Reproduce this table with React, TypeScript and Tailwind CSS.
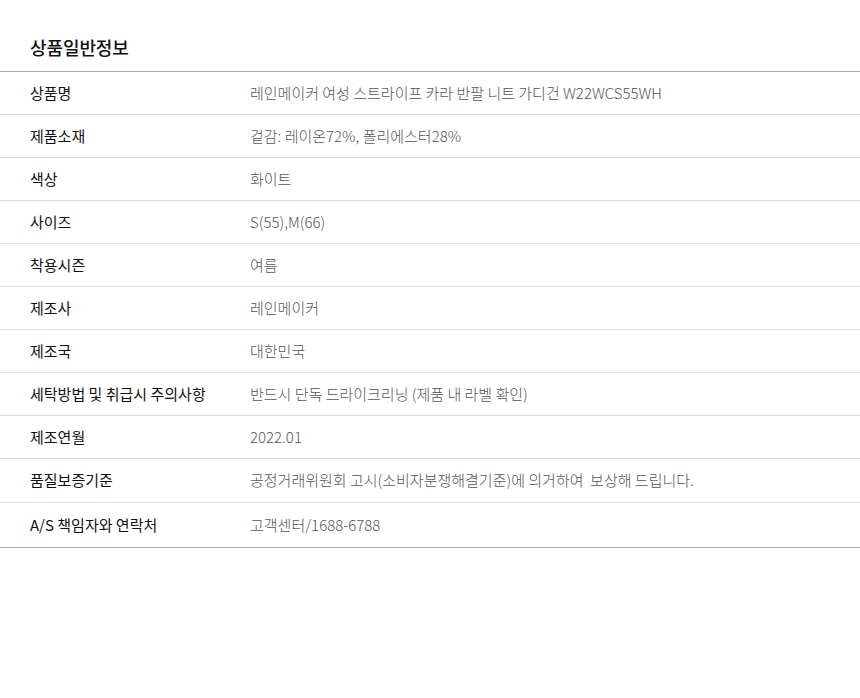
import React from "react";

const rows: [string, string][] = [
  ["상품명", "레인메이커 여성 스트라이프 카라 반팔 니트 가디건 W22WCS55WH"],
  ["제품소재", "겉감: 레이온72%, 폴리에스터28%"],
  ["색상", "화이트"],
  ["사이즈", "S(55),M(66)"],
  ["착용시즌", "여름"],
  ["제조사", "레인메이커"],
  ["제조국", "대한민국"],
  ["세탁방법 및 취급시 주의사항", "반드시 단독 드라이크리닝 (제품 내 라벨 확인)"],
  ["제조연월", "2022.01"],
  ["품질보증기준", "공정거래위원회 고시(소비자분쟁해결기준)에 의거하여  보상해 드립니다."],
  ["A/S 책임자와 연락처", "고객센터/1688-6788"],
];

export default function App() {
  return (
    <div
      className="w-[860px] h-[698px] bg-white"
      style={{ fontFamily: '"Noto Sans CJK KR", "Noto Sans", sans-serif' }}
    >
      <div className="h-[71px] pt-[24px] flex items-center px-[30px]">
        <h2 className="text-[18px] font-medium text-[#111] tracking-[-0.1px]">상품일반정보</h2>
      </div>
      <div className="border-t border-b border-t-[#aaaaaa] border-b-[#aaaaaa]">
        {rows.map(([k, v], i) => (
          <div
            key={k}
            className={
              (i >= 9 ? "h-[44px] " : "h-[43px] ") +
              (i < rows.length - 1 ? "border-b border-[#dddddd] " : "") +
              "flex items-center text-[15px]"
            }
          >
            <div className="w-[250px] pl-[30px] font-normal text-[#111]">{k}</div>
            <div className="flex-1 font-light text-[#555] whitespace-pre">{v}</div>
          </div>
        ))}
      </div>
    </div>
  );
}
